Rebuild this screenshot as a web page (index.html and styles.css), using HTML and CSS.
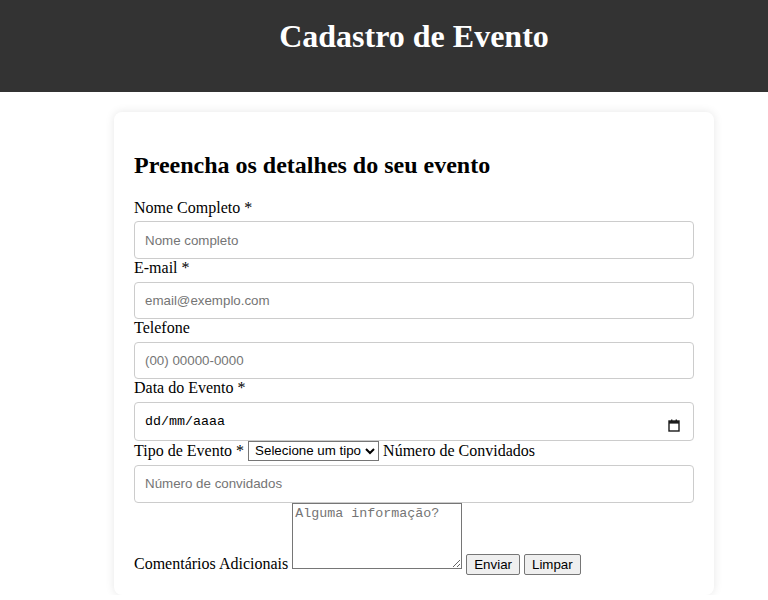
FILE: index.html
```html
<!DOCTYPE html>
<html lang="pt-BR">
<head>
<meta charset="utf-8">
<title>Cadastro de Evento</title>
<link rel="stylesheet" href="styles.css">
</head>
<body>
<header class="topo">
  <h1 class="titulo">Cadastro de Evento</h1>
</header>
<main class="pagina">
  <form class="cartao">
    <h2 class="subtitulo">Preencha os detalhes do seu evento</h2>
    <label class="rotulo" for="nome">Nome Completo *</label>
    <input class="campo" id="nome" type="text" placeholder="Nome completo">
    <label class="rotulo" for="email">E-mail *</label>
    <input class="campo" id="email" type="email" placeholder="email@exemplo.com">
    <label class="rotulo" for="tel">Telefone</label>
    <input class="campo" id="tel" type="tel" placeholder="(00) 00000-0000">
    <label class="rotulo" for="data">Data do Evento *</label>
    <div class="campo-data">
      <input class="campo campo-texto-data" id="data" type="text" placeholder="dd/mm/aaaa">
      <svg class="icone-cal" width="12" height="13" viewBox="0 0 12 13" aria-hidden="true">
        <rect x="1" y="2" width="10" height="10" fill="none" stroke="#1a1a1a" stroke-width="1.4"/>
        <rect x="1" y="2" width="10" height="2.6" fill="#1a1a1a"/>
        <rect x="3" y="0.5" width="1.4" height="2" fill="#1a1a1a"/>
        <rect x="7.6" y="0.5" width="1.4" height="2" fill="#1a1a1a"/>
      </svg>
    </div>
    <label class="rotulo" for="tipo">Tipo de Evento *</label>
    <select class="selecao" id="tipo">
      <option>Selecione um tipo</option>
      <option>Casamento</option>
      <option>Aniversário</option>
      <option>Corporativo</option>
    </select>
    <label class="rotulo" for="conv">Número de Convidados</label>
    <input class="campo" id="conv" type="number" placeholder="Número de convidados">
    <label class="rotulo" for="coment">Comentários Adicionais</label>
    <textarea class="comentarios" id="coment" placeholder="Alguma informação?"></textarea>
    <button class="botao" type="submit">Enviar</button>
    <button class="botao" type="reset">Limpar</button>
  </form>
</main>
</body>
</html>
```
FILE: styles.css
```css
html, body {
  margin: 0;
  padding: 0;
  background: #ffffff;
  font-family: "Liberation Serif", "Times New Roman", serif;
  font-size: 16px;
  color: #000;
}

.topo {
  background: #333333;
  color: #ffffff;
  padding: 18px 0 37px 60px;
  text-align: center;
}

.titulo {
  margin: 0;
  font-size: 32px;
  font-weight: bold;
  line-height: 37px;
}

.pagina {
  padding-left: 60px;
}

.cartao {
  width: 600px;
  box-sizing: border-box;
  margin: 20px auto 0;
  padding: 20px;
  background: #ffffff;
  border-radius: 8px;
  box-shadow: 0 0 10px rgba(0, 0, 0, 0.1);
}

.subtitulo {
  font-size: 24px;
  font-weight: bold;
  margin: 19.92px 0;
}

.campo {
  display: block;
  width: 100%;
  height: 37.6px;
  box-sizing: border-box;
  margin: 4.6px 0 0;
  padding: 10px;
  border: 1px solid #cccccc;
  border-radius: 4px;
  font-family: "Liberation Sans", Arial, sans-serif;
  font-size: 13.333px;
  color: #000;
  background: #fff;
}

.campo::placeholder {
  color: #757575;
}

.campo-data {
  position: relative;
}

.campo-texto-data {
  height: 38.6px;
  padding: 10px;
  font-family: "Liberation Mono", "Courier New", monospace;
  font-size: 13.333px;
}

.campo-texto-data::placeholder {
  color: #000;
}

.icone-cal {
  position: absolute;
  right: 14px;
  top: 17px;
}

.selecao {
  font-family: "Liberation Sans", Arial, sans-serif;
  font-size: 13.333px;
  height: 20px;
  padding: 0 1px 0 2px;
  border: 1px solid #767676;
  border-radius: 0;
  background: #fff;
  color: #000;
}

.comentarios {
  width: 170px;
  height: 66px;
  box-sizing: border-box;
  padding: 2px;
  border: 1px solid #767676;
  font-family: "Liberation Mono", "Courier New", monospace;
  font-size: 13.333px;
  resize: both;
}

.comentarios::placeholder {
  color: #757575;
}

.botao {
  font-family: "Liberation Sans", Arial, sans-serif;
  font-size: 13.333px;
  padding: 2px 7px;
  border: 1px solid #767676;
  border-radius: 2px;
  background: #efefef;
  color: #000;
  height: 21.3px;
}
```
